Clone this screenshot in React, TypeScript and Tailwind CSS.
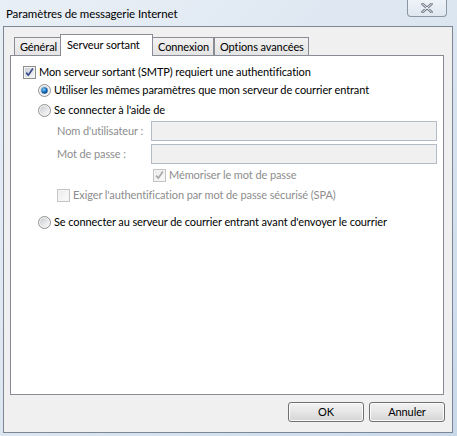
import React from 'react';

const font = { fontFamily: 'Lato, "Liberation Sans", Arial, sans-serif' };

function CheckBox({ checked = false, disabled = false }: { checked?: boolean; disabled?: boolean }) {
  const border = disabled ? '#c4c4c4' : '#8e8f8f';
  const mark = disabled ? '#a8a8a8' : '#3b4d8a';
  return (
    <svg width="13" height="13" viewBox="0 0 13 13" className="shrink-0">
      <defs>
        <linearGradient id={disabled ? 'cbd' : 'cb'} x1="0" y1="0" x2="1" y2="1">
          <stop offset="0" stopColor={disabled ? '#ececec' : '#cbcfd5'} />
          <stop offset="1" stopColor={disabled ? '#fafafa' : '#f6f6f6'} />
        </linearGradient>
      </defs>
      <rect x="0.5" y="0.5" width="12" height="12" fill="#f4f4f4" stroke={border} />
      <rect x="2" y="2" width="9" height="9" fill={`url(#${disabled ? 'cbd' : 'cb'})`} />
      {checked && <path d="M3.2 6.6 L5.3 9.2 L9.9 2.6" fill="none" stroke={mark} strokeWidth="1.7" />}
    </svg>
  );
}

function Radio({ checked = false }: { checked?: boolean }) {
  return (
    <svg width="13" height="13" viewBox="0 0 13 13" className="shrink-0">
      <defs>
        <linearGradient id="rb" x1="0" y1="0" x2="1" y2="1">
          <stop offset="0" stopColor="#c9ccd1" />
          <stop offset="1" stopColor="#fbfbfb" />
        </linearGradient>
        <radialGradient id="rd" cx="0.4" cy="0.35" r="0.7">
          <stop offset="0" stopColor="#8fd0f5" />
          <stop offset="0.5" stopColor="#1d76c6" />
          <stop offset="1" stopColor="#0b3a7a" />
        </radialGradient>
      </defs>
      <circle cx="6.5" cy="6.5" r="6" fill="#f4f4f4" stroke="#8e8f8f" />
      <circle cx="6.5" cy="6.5" r="4.5" fill="url(#rb)" />
      {checked && <circle cx="6.5" cy="6.5" r="3.2" fill="url(#rd)" />}
    </svg>
  );
}

function Tab({ label, active = false, w }: { label: string; active?: boolean; w: string }) {
  if (active) {
    return (
      <div className={`${w} relative z-10 -mx-[1px] h-[22px] border border-b-0 border-[#898c95] bg-white pl-[6px] pt-[1px] leading-[18px] text-black`}>
        {label}
      </div>
    );
  }
  return (
    <div className={`${w} mt-[3px] h-[19px] border border-b-0 border-[#898c95] bg-gradient-to-b from-[#f2f2f2] to-[#e3e3e3] pl-[5px] leading-[18px] text-black`}>
      {label}
    </div>
  );
}

function Button({ label }: { label: string }) {
  return (
    <div className="flex h-[20px] w-[76px] items-center justify-center rounded-[3px] border border-[#707070] bg-gradient-to-b from-[#f2f2f2] via-[#e6e6e6] to-[#d4d4d4] text-black shadow-[inset_0_0_0_1px_#fbfbfb]">
      {label}
    </div>
  );
}

export default function App() {
  return (
    <div
      style={font}
      className="relative h-[436px] w-[457px] overflow-hidden whitespace-nowrap bg-gradient-to-br from-[#e9eff6] via-[#dce6f1] to-[#c9d9ea] text-[11px] tracking-[-0.1px]"
    >
      {/* title bar */}
      <div className="flex h-[26px] items-start">
        <div className="ml-[6px] mt-[6px] text-[11.5px] leading-[16px] text-black">Paramètres de messagerie Internet</div>
        <div className="ml-auto mr-[10px] flex h-[17px] w-[40px] items-center justify-center rounded-b-[4px] border border-t-0 border-[#8a96a6] bg-gradient-to-b from-[#eef3f8] to-[#dfe7f0]">
          <svg width="12" height="10" viewBox="0 0 12 10">
            <path d="M1.5 1 L10.5 9 M10.5 1 L1.5 9" stroke="#6c7480" strokeWidth="2.6" strokeLinecap="round" />
            <path d="M1.5 1 L10.5 9 M10.5 1 L1.5 9" stroke="#f4f6f8" strokeWidth="1" strokeLinecap="round" />
          </svg>
        </div>
      </div>

      {/* client area */}
      <div className="ml-[3px] mr-[4px] flex h-[407px] flex-col border border-[#7d8694] bg-[#f0f0f0]">
        <div className="ml-[8px] mt-[7px] flex h-[22px] items-end">
          <div className="ml-[2px] flex items-start">
            <Tab label="Général" w="w-[47px]" />
            <Tab label="Serveur sortant" w="w-[93px]" active />
            <Tab label="Connexion" w="w-[62px]" />
            <Tab label="Options avancées" w="w-[95px]" />
          </div>
        </div>
        <div className="-mt-[1px] ml-[6px] h-[340px] w-[434px] border border-[#898c95] bg-white pl-[12px] text-black">
          <div className="mt-[7px] flex h-[18px] items-center gap-[3px]">
            <CheckBox checked />
            <span>Mon serveur sortant (SMTP) requiert une authentification</span>
          </div>
          <div className="ml-[15px] flex h-[18px] items-center gap-[3px]">
            <Radio checked />
            <span>Utiliser les mêmes paramètres que mon serveur de courrier entrant</span>
          </div>
          <div className="ml-[15px] mt-[2px] flex h-[18px] items-center gap-[3px]">
            <Radio />
            <span>Se connecter à l'aide de</span>
          </div>
          <div className="ml-[34px] mt-[2px] flex h-[20px] items-center">
            <span className="w-[94px] text-[#8d8d8d]">Nom d'utilisateur :</span>
            <div className="h-[20px] w-[286px] border border-[#b5bcc7] bg-[#f0f0f0]" />
          </div>
          <div className="ml-[34px] mt-[3px] flex h-[20px] items-center">
            <span className="w-[94px] text-[#8d8d8d]">Mot de passe :</span>
            <div className="h-[20px] w-[286px] border border-[#b5bcc7] bg-[#f0f0f0]" />
          </div>
          <div className="ml-[130px] mt-[2px] flex h-[18px] items-center gap-[3px]">
            <CheckBox checked disabled />
            <span className="text-[#8d8d8d]">Mémoriser le mot de passe</span>
          </div>
          <div className="ml-[34px] mt-[2px] flex h-[18px] items-center gap-[3px]">
            <CheckBox disabled />
            <span className="text-[#8d8d8d]">Exiger l'authentification par mot de passe sécurisé (SPA)</span>
          </div>
          <div className="ml-[15px] mt-[9px] flex h-[18px] items-center gap-[3px]">
            <Radio />
            <span>Se connecter au serveur de courrier entrant avant d'envoyer le courrier</span>
          </div>
        </div>
        <div className="mr-[7px] mt-[7px] flex justify-end gap-[5px]">
          <Button label="OK" />
          <Button label="Annuler" />
        </div>
      </div>
    </div>
  );
}
